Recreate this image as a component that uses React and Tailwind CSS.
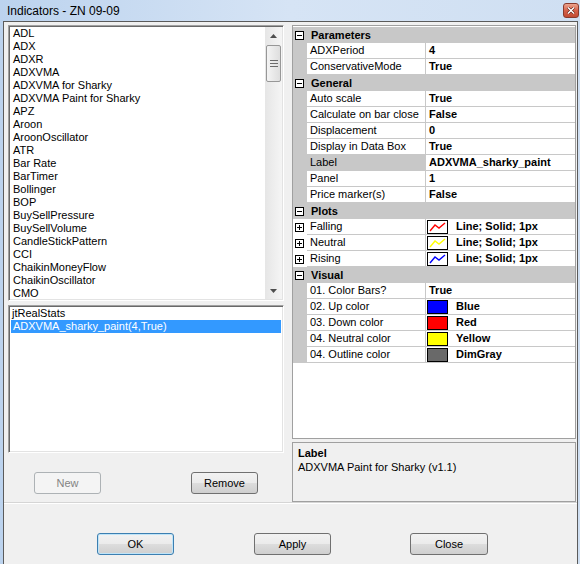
import React from 'react';

const indicators = [
  'ADL', 'ADX', 'ADXR', 'ADXVMA', 'ADXVMA for Sharky', 'ADXVMA Paint for Sharky', 'APZ', 'Aroon',
  'AroonOscillator', 'ATR', 'Bar Rate', 'BarTimer', 'Bollinger', 'BOP', 'BuySellPressure',
  'BuySellVolume', 'CandleStickPattern', 'CCI', 'ChaikinMoneyFlow', 'ChaikinOscillator', 'CMO',
];

const props = [
  { cat: 'Parameters' },
  { name: 'ADXPeriod', value: '4' },
  { name: 'ConservativeMode', value: 'True' },
  { cat: 'General' },
  { name: 'Auto scale', value: 'True' },
  { name: 'Calculate on bar close', value: 'False' },
  { name: 'Displacement', value: '0' },
  { name: 'Display in Data Box', value: 'True' },
  { name: 'Label', value: 'ADXVMA_sharky_paint', selected: true },
  { name: 'Panel', value: '1' },
  { name: 'Price marker(s)', value: 'False' },
  { cat: 'Plots' },
  { name: 'Falling', value: 'Line; Solid; 1px', plot: '#ff0000' },
  { name: 'Neutral', value: 'Line; Solid; 1px', plot: '#ffff00' },
  { name: 'Rising', value: 'Line; Solid; 1px', plot: '#0000ff' },
  { cat: 'Visual' },
  { name: '01. Color Bars?', value: 'True' },
  { name: '02. Up color', value: 'Blue', swatch: '#0000ff' },
  { name: '03. Down color', value: 'Red', swatch: '#ff0000' },
  { name: '04. Neutral color', value: 'Yellow', swatch: '#ffff00' },
  { name: '04. Outline color', value: 'DimGray', swatch: '#696969' },
];

const ExpandBox = ({ open }) => (
  <svg width="9" height="9" viewBox="0 0 9 9" className="block">
    <rect x="0.5" y="0.5" width="8" height="8" fill="#fff" stroke="#000" />
    <line x1="2" y1="4.5" x2="7" y2="4.5" stroke="#000" />
    {!open && <line x1="4.5" y1="2" x2="4.5" y2="7" stroke="#000" />}
  </svg>
);

const Btn = ({ children, w = 'w-[67px]', disabled, focus, className = '' }) => (
  <div
    className={`${w} ${className} h-[22px] rounded-[3px] border flex items-center justify-center ${
      disabled
        ? 'border-[#adb2b5] bg-[#f4f4f4] text-[#838383]'
        : focus
        ? 'border-[#3c7fb1] bg-[linear-gradient(#f2f2f2_0%,#ebebeb_50%,#dddddd_50%,#cfcfcf_100%)] shadow-[inset_0_0_0_1px_#bfe4f8] text-black'
        : 'border-[#707070] bg-[linear-gradient(#f2f2f2_0%,#ebebeb_50%,#dddddd_50%,#cfcfcf_100%)] text-black'
    }`}
  >
    {children}
  </div>
);

const Scrollbar = () => (
  <div className="w-[17px] flex flex-col bg-gradient-to-r from-[#e6e6e6] to-[#f5f5f5]">
    <div className="h-[17px] flex items-center justify-center">
      <svg width="7" height="4" viewBox="0 0 7 4"><path d="M0 4 L3.5 0 L7 4 Z" fill="#4d4d4d" /></svg>
    </div>
    <div className="mt-[1px] mx-[1px] h-[37px] rounded-[2px] border border-[#979797] bg-gradient-to-r from-[#f4f4f4] to-[#dedede] flex items-center justify-center">
      <svg width="8" height="7" viewBox="0 0 8 7">
        <line x1="0" y1="0.5" x2="8" y2="0.5" stroke="#6b6b6b" />
        <line x1="0" y1="3.5" x2="8" y2="3.5" stroke="#6b6b6b" />
        <line x1="0" y1="6.5" x2="8" y2="6.5" stroke="#6b6b6b" />
      </svg>
    </div>
    <div className="flex-1" />
    <div className="h-[17px] flex items-center justify-center">
      <svg width="7" height="4" viewBox="0 0 7 4"><path d="M0 0 L7 0 L3.5 4 Z" fill="#4d4d4d" /></svg>
    </div>
  </div>
);

const PropRow = ({ p }) => {
  if (p.cat) {
    return (
      <div className="flex h-4 bg-[#c8c8c8] items-center">
        <div className="w-[14px] pl-[2px] flex items-center"><ExpandBox open /></div>
        <div className="pl-[4px] font-bold text-black leading-4">{p.cat}</div>
      </div>
    );
  }
  return (
    <div className="flex h-4">
      <div className={`w-[14px] pl-[2px] flex items-center ${p.plot ? 'bg-white' : 'bg-[#c8c8c8]'}`}>
        {p.plot && <ExpandBox />}
      </div>
      <div className={`w-[119px] border-b border-r border-[#c8c8c8] pl-[3px] leading-[15px] whitespace-nowrap ${p.selected ? 'bg-[#c8c8c8]' : 'bg-white'}`}>
        {p.name}
      </div>
      <div className="flex-1 border-b border-[#c8c8c8] bg-white flex items-center font-bold whitespace-nowrap">
        {p.plot ? (
          <>
            <svg width="21" height="14" viewBox="0 0 21 14" className="ml-[1px] block">
              <rect x="0.5" y="0.5" width="20" height="13" fill="#fff" stroke="#000" />
              <polyline points="3,11 8,5 12,8 18,3" fill="none" stroke={p.plot} strokeWidth="1.4" />
            </svg>
            <span className="ml-[8px]">{p.value}</span>
          </>
        ) : p.swatch ? (
          <>
            <div className="ml-[1px] w-[21px] h-[14px] border border-black" style={{ backgroundColor: p.swatch }} />
            <span className="ml-[8px]">{p.value}</span>
          </>
        ) : (
          <span className="pl-[3px]">{p.value}</span>
        )}
      </div>
    </div>
  );
};

export default function App() {
  return (
    <div
      className="w-[580px] h-[564px] overflow-hidden flex flex-col text-[11px] text-black bg-gradient-to-r from-[#bcd3ee] via-[#d6e4f5] to-[#cfdff2]"
      style={{ fontFamily: '"Liberation Sans", Arial, sans-serif' }}
    >
      {/* title bar */}
      <div className="h-[21px] flex items-center justify-between pl-[7px] pr-[1px]">
        <span className="text-[12px] leading-none pt-[1px]">Indicators - ZN 09-09</span>
        <div className="w-[16px] h-[15px] rounded-[3px] border border-[#8a3a2c] bg-gradient-to-b from-[#eba48f] via-[#d5614a] to-[#c24a32] flex items-center justify-center">
          <svg width="8" height="7" viewBox="0 0 8 7">
            <path d="M1 0.5 L7 6.5 M7 0.5 L1 6.5" stroke="#5a1a10" strokeWidth="2.6" />
            <path d="M1 0.5 L7 6.5 M7 0.5 L1 6.5" stroke="#fff" strokeWidth="1.5" />
          </svg>
        </div>
      </div>

      {/* client area */}
      <div className="flex-1 ml-[3px] mr-[2px] border-t border-x border-[#5b5b5b] bg-[#f0f0f0] flex flex-col">
        <div className="h-[481px] flex border-b border-[#d5d5d5] shadow-[0_1px_0_#fff]">
          {/* left column */}
          <div className="w-[288px] pl-[4px] pt-[3px] flex flex-col">
            <div className="w-[276px] h-[276px] border border-t-[#a0a0a0] border-l-[#a0a0a0] border-r-white border-b-white shadow-[inset_1px_1px_0_#696969,inset_-1px_-1px_0_#e3e3e3] p-[1px] flex">
              <div className="flex-1 bg-white overflow-hidden pl-[3px]">
                {indicators.map(n => (
                  <div key={n} className="h-[13px] leading-[13px] whitespace-nowrap">{n}</div>
                ))}
              </div>
              <Scrollbar />
            </div>
            <div className="mt-[4px] w-[276px] h-[148px] border border-t-[#a0a0a0] border-l-[#a0a0a0] border-r-white border-b-white shadow-[inset_1px_1px_0_#696969,inset_-1px_-1px_0_#e3e3e3] p-[1px]">
              <div className="h-full bg-white">
                <div className="h-[13px] leading-[13px] pl-[2px]">jtRealStats</div>
                <div className="h-[13px] leading-[13px] pl-[2px] mx-[1px] bg-[#3399ff] text-white">ADXVMA_sharky_paint(4,True)</div>
              </div>
            </div>
            <div className="mt-[19px] flex pl-[26px] gap-[90px]">
              <Btn w="w-[67px]" disabled>New</Btn>
              <Btn w="w-[67px]">Remove</Btn>
            </div>
          </div>

          {/* right column */}
          <div className="flex-1 pr-[1px] pt-[3px] flex flex-col">
            <div className="h-[414px] border border-[#a0a0a0] bg-white pt-[1px] overflow-hidden">
              {props.map((p, i) => <PropRow key={i} p={p} />)}
            </div>
            <div className="mt-[3px] h-[60px] border border-[#a0a0a0] bg-[#f0f0f0] px-[5px] pt-[3px]">
              <div className="font-bold leading-[14px]">Label</div>
              <div className="leading-[14px]">ADXVMA Paint for Sharky (v1.1)</div>
            </div>
          </div>
        </div>

        {/* dialog buttons */}
        <div className="flex-1 flex items-start pt-[30px] pl-[93px]">
          <Btn w="w-[77px]" focus>OK</Btn>
          <Btn w="w-[77px]" className="ml-[80px]">Apply</Btn>
          <Btn w="w-[78px]" className="ml-[79px]">Close</Btn>
        </div>
      </div>
    </div>
  );
}
